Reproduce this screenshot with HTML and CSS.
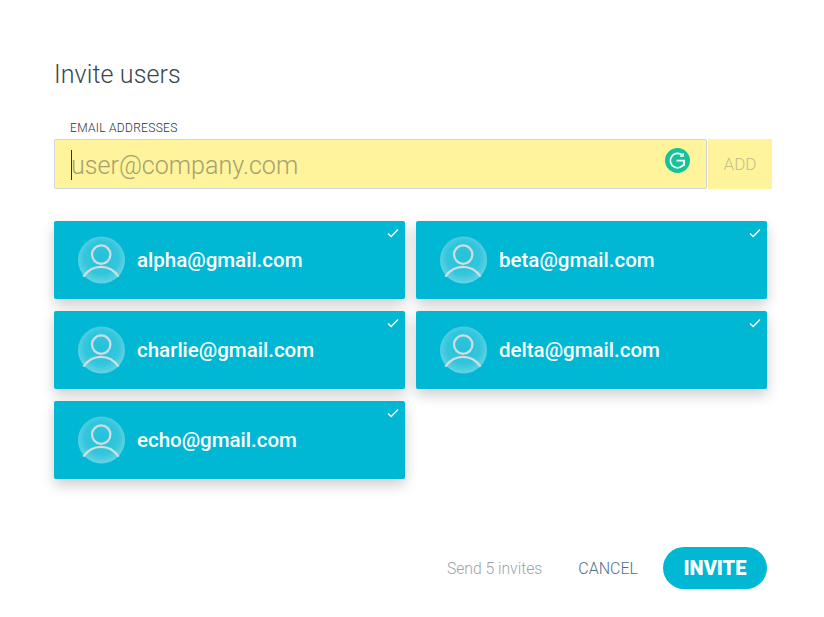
FILE: index.html
```html
<!DOCTYPE html>
<html lang="en">
<head>
    <meta charset="UTF-8">
    <meta name="viewport" content="width=device-width, initial-scale=1.0">
    <title>Invite users</title>
    <link rel="stylesheet" href="styles.css">
</head>
<body>

<div class="dialog">
    <h2 class="title">Invite users</h2>

    <label class="field-label" for="emails">EMAIL ADDRESSES</label>
    <div class="add-row">
        <div class="field">
            <span class="caret"></span>
            <input id="emails" class="field-input" type="text" placeholder="user@company.com">
            <svg class="grammarly" width="25" height="25" viewBox="0 0 25 25">
                <circle cx="12.5" cy="12.5" r="12.5" fill="#15c39a"/>
                <path d="M17.6 7.4A7.2 7.2 0 1 0 19.5 14.5" fill="none" stroke="#fff" stroke-width="1.7"/>
                <path d="M11.5 12.6H19V18" fill="none" stroke="#fff" stroke-width="1.7"/>
                <path d="M18.2 5V8.2H15" fill="none" stroke="#fff" stroke-width="1.2"/>
            </svg>
        </div>
        <button class="add-btn">ADD</button>
    </div>

    <div class="users">
        <div class="user-card">
            <svg class="avatar" viewBox="0 0 48 48"><use href="#avatar"/></svg>
            <span class="user-email">alpha@gmail.com</span>
            <svg class="check" viewBox="0 0 12 10"><path d="M1 5.5L4.2 8.5L11 1.5"/></svg>
        </div>
        <div class="user-card">
            <svg class="avatar" viewBox="0 0 48 48"><use href="#avatar"/></svg>
            <span class="user-email">beta@gmail.com</span>
            <svg class="check" viewBox="0 0 12 10"><path d="M1 5.5L4.2 8.5L11 1.5"/></svg>
        </div>
        <div class="user-card">
            <svg class="avatar" viewBox="0 0 48 48"><use href="#avatar"/></svg>
            <span class="user-email">charlie@gmail.com</span>
            <svg class="check" viewBox="0 0 12 10"><path d="M1 5.5L4.2 8.5L11 1.5"/></svg>
        </div>
        <div class="user-card">
            <svg class="avatar" viewBox="0 0 48 48"><use href="#avatar"/></svg>
            <span class="user-email">delta@gmail.com</span>
            <svg class="check" viewBox="0 0 12 10"><path d="M1 5.5L4.2 8.5L11 1.5"/></svg>
        </div>
        <div class="user-card">
            <svg class="avatar" viewBox="0 0 48 48"><use href="#avatar"/></svg>
            <span class="user-email">echo@gmail.com</span>
            <svg class="check" viewBox="0 0 12 10"><path d="M1 5.5L4.2 8.5L11 1.5"/></svg>
        </div>
    </div>

    <div class="actions">
        <span class="send-count">Send 5 invites</span>
        <button class="cancel-btn">CANCEL</button>
        <button class="invite-btn">INVITE</button>
    </div>
</div>

<!-- Shared avatar drawing -->
<svg class="defs" width="0" height="0">
    <defs>
        <radialGradient id="avatarFill" cx="0.5" cy="0.45" r="0.55">
            <stop offset="0" stop-color="#fff" stop-opacity="0.14"/>
            <stop offset="0.65" stop-color="#fff" stop-opacity="0.2"/>
            <stop offset="1" stop-color="#fff" stop-opacity="0.4"/>
        </radialGradient>
        <g id="avatar">
            <circle cx="24" cy="24" r="24" fill="url(#avatarFill)"/>
            <circle cx="23.7" cy="18.5" r="9.4" fill="none" stroke="#d0dde2" stroke-width="2.3"/>
            <path d="M5.5 41C10 34.5 16.5 31 23.5 31S37 34.5 41.5 41" fill="none" stroke="#d0dde2" stroke-width="2.3"/>
        </g>
    </defs>
</svg>

</body>
</html>
```
FILE: styles.css
```css
body {
    margin: 0;
    background: #fff;
    font-family: Roboto, "Liberation Sans", sans-serif;
}
.dialog {
    width: 713px;
    padding: 61px 0 0 54px;
}
.title {
    margin: 0;
    font-size: 25px;
    font-weight: 300;
    letter-spacing: 0.1px;
    line-height: 28px;
    color: #37474f;
}
.field-label {
    display: block;
    margin: 32px 0 0 16px;
    font-size: 12px;
    font-weight: 300;
    letter-spacing: 0.3px;
    line-height: 14px;
    color: #263238;
}
.add-row {
    display: flex;
    width: 718px;
    height: 50px;
    margin-top: 4px;
}
.field {
    position: relative;
    display: flex;
    align-items: center;
    box-sizing: border-box;
    width: 653px;
    padding: 2px 14px 0 16px;
    background: #fff49c;
    border: 1px solid #cfd6dc;
    border-radius: 2px;
}
.caret {
    position: absolute;
    left: 16px;
    top: 10px;
    width: 1px;
    height: 30px;
    background: #263238;
}
.field-input {
    flex: 1;
    min-width: 0;
    padding: 0;
    border: none;
    outline: none;
    background: transparent;
    font-family: inherit;
    font-size: 25.1px;
    font-weight: 300;
}
.field-input::placeholder {
    color: #a5a16c;
    opacity: 1;
}
.grammarly {
    position: absolute;
    top: 8px;
    right: 16px;
}
.add-btn {
    width: 64px;
    margin-left: 1px;
    padding: 0;
    border: none;
    background: #fff49c;
    color: #c6c088;
    font-family: inherit;
    font-size: 17px;
    font-weight: 300;
}
.users {
    display: grid;
    grid-template-columns: 351px 351px;
    gap: 12px 11px;
    margin-top: 32px;
}
.user-card {
    position: relative;
    display: flex;
    align-items: center;
    height: 78px;
    padding-left: 24px;
    background: #00b8d4;
    border-radius: 2px;
    box-shadow: 0 6px 14px rgba(0, 0, 0, 0.2);
}
.avatar {
    width: 47px;
    height: 48px;
    margin-right: 12px;
}
.user-email {
    font-size: 20.5px;
    font-weight: 500;
    color: #fff;
}
.check {
    position: absolute;
    top: 7px;
    right: 6px;
    width: 12px;
    height: 10px;
}
.check path {
    fill: none;
    stroke: #fff;
    stroke-width: 1.3;
}
.actions {
    display: flex;
    align-items: center;
    justify-content: flex-end;
    margin-top: 68px;
}
.send-count {
    margin-right: 36px;
    font-size: 15.7px;
    font-weight: 300;
    color: #9aa5ab;
}
.cancel-btn {
    margin-right: 25px;
    padding: 0;
    border: none;
    background: none;
    color: #4f6f7f;
    font-family: inherit;
    font-size: 16px;
    font-weight: 300;
}
.invite-btn {
    width: 104px;
    height: 42px;
    padding: 0;
    border: none;
    border-radius: 21px;
    background: #00b8d4;
    color: #fff;
    font-family: inherit;
    font-size: 20px;
    font-weight: 900;
}
.defs {
    position: absolute;
}
```
